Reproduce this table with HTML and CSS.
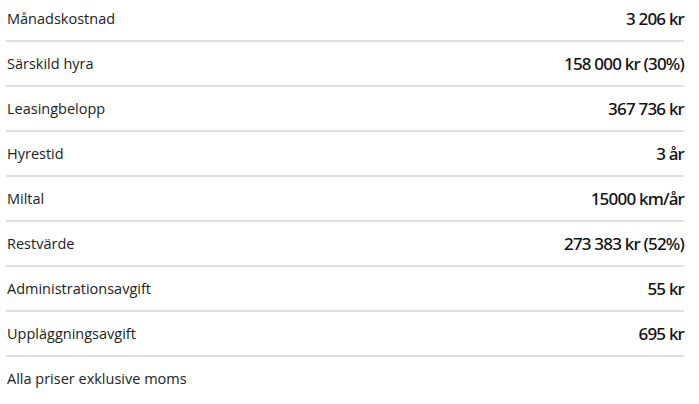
FILE: index.html
```html
<!DOCTYPE html>
<html lang="sv">
<head>
<meta charset="utf-8">
<link rel="stylesheet" href="styles.css">
</head>
<body>
<div class="summary">
  <div class="row"><span class="label">Månadskostnad</span><span class="value">3 206 kr</span></div>
  <div class="row"><span class="label">Särskild hyra</span><span class="value">158 000 kr (30%)</span></div>
  <div class="row"><span class="label">Leasingbelopp</span><span class="value">367 736 kr</span></div>
  <div class="row"><span class="label">Hyrestid</span><span class="value">3 år</span></div>
  <div class="row"><span class="label">Miltal</span><span class="value">15000 km/år</span></div>
  <div class="row"><span class="label">Restvärde</span><span class="value">273 383 kr (52%)</span></div>
  <div class="row"><span class="label">Administrationsavgift</span><span class="value">55 kr</span></div>
  <div class="row"><span class="label">Uppläggningsavgift</span><span class="value">695 kr</span></div>
  <div class="note">Alla priser exklusive moms</div>
</div>
</body>
</html>
```

FILE: styles.css
```css
html, body {
  margin: 0;
  padding: 0;
  background: #ffffff;
}
body {
  font-family: "Open Sans", "Noto Sans", sans-serif;
  color: #1f1f1f;
}
.summary {
  width: 678px;
  margin: -3px 0 0 6px;
}
.row {
  display: flex;
  justify-content: space-between;
  align-items: center;
  height: 43px;
  border-bottom: 2px solid #e0e0e0;
  padding: 0 0 0 1px;
}
.label {
  font-size: 14.5px;
  color: #222;
}
.value {
  font-family: "Noto Sans", sans-serif;
  font-size: 17px;
  font-weight: 500;
  letter-spacing: -0.8px;
  color: #111;
}
.note {
  height: 43px;
  display: flex;
  align-items: center;
  padding-left: 1px;
  font-size: 14.5px;
  color: #222;
}
```
